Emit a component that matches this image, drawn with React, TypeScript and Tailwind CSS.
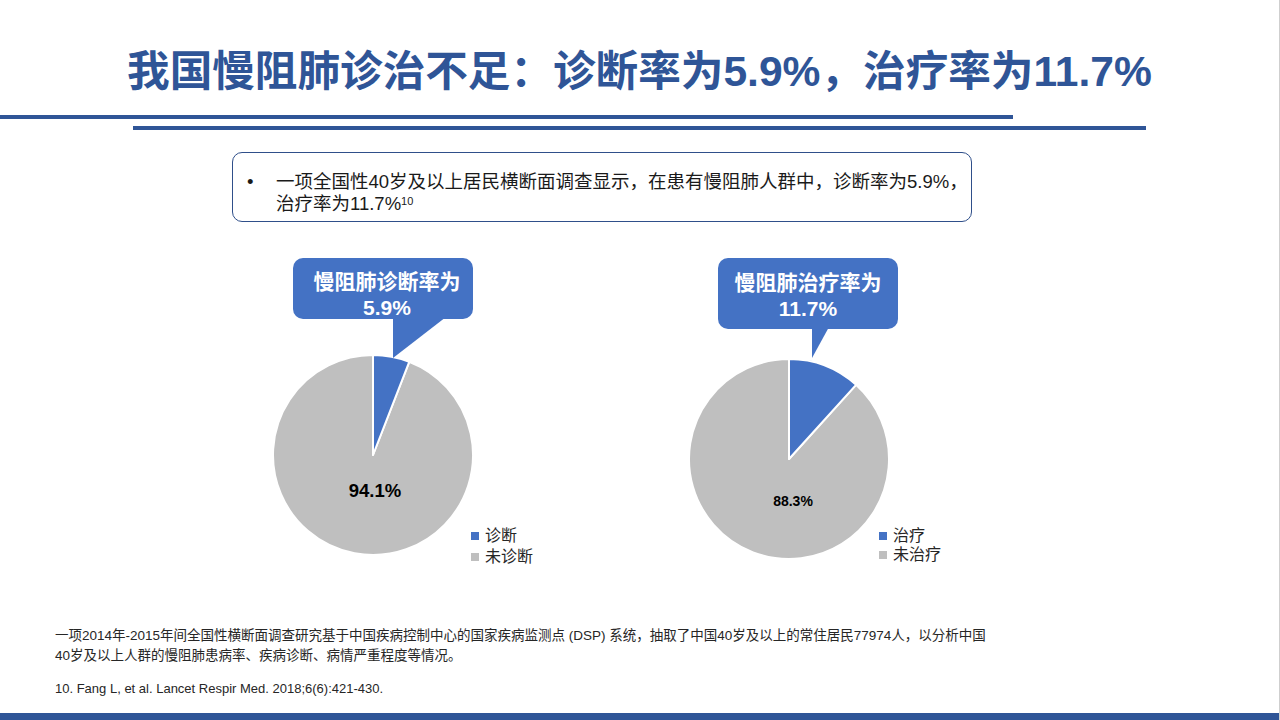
import React from "react";

const BLUE = "#4472c4";
const GRAY = "#bfbfbf";

function slicePath(cx: number, cy: number, r: number, from: number, to: number) {
  const a0 = (from * 2 * Math.PI) / 100;
  const a1 = (to * 2 * Math.PI) / 100;
  const x0 = cx + r * Math.sin(a0);
  const y0 = cy - r * Math.cos(a0);
  const x1 = cx + r * Math.sin(a1);
  const y1 = cy - r * Math.cos(a1);
  const large = to - from > 50 ? 1 : 0;
  return `M${cx},${cy} L${x0},${y0} A${r},${r} 0 ${large} 1 ${x1},${y1} Z`;
}

function Pie({ value, label, labelClass, labelX, labelY }: { value: number; label: string; labelClass: string; labelX: number; labelY: number }) {
  return (
    <svg width="202" height="202" viewBox="0 0 202 202" className="shrink-0">
      <path d={slicePath(101, 101, 100, value, 100)} fill={GRAY} stroke="#fff" strokeWidth="2" strokeLinejoin="round" />
      <path d={slicePath(101, 101, 100, 0, value)} fill={BLUE} stroke="#fff" strokeWidth="2" strokeLinejoin="round" />
      <text x={labelX} y={labelY} textAnchor="middle" dominantBaseline="central" className={labelClass} style={{ fontFamily: '"Liberation Sans", Arial, sans-serif' }} fill="#000">
        {label}
      </text>
    </svg>
  );
}

function Legend({ items, rowClass }: { items: { color: string; text: string }[]; rowClass: string }) {
  return (
    <div className="flex flex-col">
      {items.map((it) => (
        <div key={it.text} className={`flex items-center ${rowClass} text-[16px] text-[#262626] whitespace-nowrap`}>
          <span className="w-[8px] h-[8px] mr-[6px]" style={{ background: it.color }} />
          {it.text}
        </div>
      ))}
    </div>
  );
}

export default function App() {
  const font = { fontFamily: '"Liberation Sans", "Noto Sans CJK SC", sans-serif' };

  return (
    <div className="w-[1280px] h-[720px] bg-white overflow-hidden flex flex-col border-r border-[#cfcfcf]" style={font}>
      <h1 className="pt-[46px] text-center text-[42.6px] leading-[50px] font-bold text-[#2f5597] whitespace-nowrap">
        我国慢阻肺诊治不足：诊断率为5.9%，治疗率为11.7%
      </h1>

      <div className="mt-[19px] w-[1013px] h-[4px] bg-[#2f5597]" />
      <div className="mt-[7px] ml-[133px] w-[1013px] h-[4px] bg-[#2f5597]" />

      <div className="mt-[22px] ml-[232px] w-[740px] h-[70px] border-[1.5px] border-[#2f4f8a] rounded-[10px] pt-[18px] pl-[14px] text-[18.5px] leading-[22px] text-[#1a1a1a] flex">
        <span className="w-[29px] shrink-0">•</span>
        <p className="whitespace-nowrap">
          一项全国性40岁及以上居民横断面调查显示，在患有慢阻肺人群中，诊断率为5.9%，
          <br />
          治疗率为11.7%<sup className="text-[11px]">10</sup>
        </p>
      </div>

      <div className="mt-[36px] h-[310px] flex">
        <div className="ml-[272px] w-[416px] flex flex-col">
          <div className="relative ml-[21px] w-[180px] h-[61px] bg-[#4472c4] rounded-[10px] pt-[11px] pl-[8px] text-center text-white font-bold text-[21px] leading-[26px]">
            慢阻肺诊断率为
            <br />
            5.9%
            <svg className="absolute left-0 top-0 overflow-visible" width="1" height="1">
              <polygon points="100,59 153,59 100,100" fill={BLUE} />
            </svg>
          </div>
          <div className="mt-[35px] flex">
            <Pie value={5.9} label="94.1%" labelClass="text-[18.5px] font-bold" labelX={103} labelY={136} />
            <div className="mt-[171px] -ml-[3px]">
              <Legend
                rowClass="h-[21px]"
                items={[
                  { color: BLUE, text: "诊断" },
                  { color: GRAY, text: "未诊断" },
                ]}
              />
            </div>
          </div>
        </div>

        <div className="flex flex-col">
          <div className="relative ml-[30px] w-[180px] h-[71px] bg-[#4472c4] rounded-[10px] pt-[12px] text-center text-white font-bold text-[21px] leading-[26px]">
            慢阻肺治疗率为
            <br />
            11.7%
            <svg className="absolute left-0 top-0 overflow-visible" width="1" height="1">
              <polygon points="94,69 111,69 94,100" fill={BLUE} />
            </svg>
          </div>
          <div className="mt-[29px] flex">
            <Pie value={11.7} label="88.3%" labelClass="text-[14px] font-bold" labelX={105} labelY={143} />
            <div className="mt-[168px] -ml-[11px]">
              <Legend
                rowClass="h-[19px]"
                items={[
                  { color: BLUE, text: "治疗" },
                  { color: GRAY, text: "未治疗" },
                ]}
              />
            </div>
          </div>
        </div>
      </div>

      <div className="mt-[58px] ml-[55px] text-[13.5px] leading-[20px] text-[#262626]">
        <p>
          一项2014年-2015年间全国性横断面调查研究基于中国疾病控制中心的国家疾病监测点 (DSP) 系统，抽取了中国40岁及以上的常住居民77974人，以分析中国
          <br />
          40岁及以上人群的慢阻肺患病率、疾病诊断、病情严重程度等情况。
        </p>
        <p className="mt-[13px] text-[13px]">10. Fang L, et al. Lancet Respir Med. 2018;6(6):421-430.</p>
      </div>

      <div className="flex-1" />
      <div className="h-[7px] bg-[#2f5597]" />
    </div>
  );
}
